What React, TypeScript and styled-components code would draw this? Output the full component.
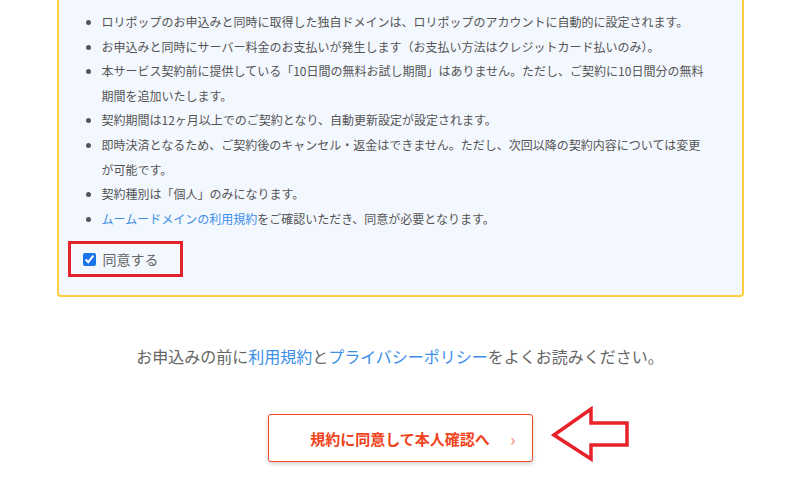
import React from "react";
import styled, { createGlobalStyle } from "styled-components";

const GlobalStyle = createGlobalStyle`
  html, body {
    margin: 0;
    padding: 0;
    background: #ffffff;
    overflow: hidden;
  }
  body {
    font-family: "Noto Sans CJK JP", "Noto Sans", sans-serif;
    color: #555555;
  }
`;

const Link = styled.a`
  color: #3a8ee8;
  text-decoration: none;
`;

const getNotes = (): React.ReactNode[] => [
  "ロリポップのお申込みと同時に取得した独自ドメインは、ロリポップのアカウントに自動的に設定されます。",
  "お申込みと同時にサーバー料金のお支払いが発生します（お支払い方法はクレジットカード払いのみ）。",
  <>
    本サービス契約前に提供している「10日間の無料お試し期間」はありません。ただし、ご契約に10日間分の無料
    <br />
    期間を追加いたします。
  </>,
  "契約期間は12ヶ月以上でのご契約となり、自動更新設定が設定されます。",
  <>
    即時決済となるため、ご契約後のキャンセル・返金はできません。ただし、次回以降の契約内容については変更
    <br />
    が可能です。
  </>,
  "契約種別は「個人」のみになります。",
  <>
    <Link href="#">ムームードメインの利用規約</Link>をご確認いただき、同意が必要となります。
  </>,
];

const App = () => {
  const notes = getNotes();

  return (
    <Page>
      <GlobalStyle />
      <Panel>
        <NoteList>
          {notes.map((note, i) => (
            <NoteItem key={i}>{note}</NoteItem>
          ))}
        </NoteList>
        <AgreeLabel>
          <input type="checkbox" defaultChecked />
          <span>同意する</span>
        </AgreeLabel>
      </Panel>

      <Notice>
        お申込みの前に<Link href="#">利用規約</Link>と
        <Link href="#">プライバシーポリシー</Link>をよくお読みください。
      </Notice>

      <ButtonRow>
        <ButtonWrap>
          <NextButton type="button">
            <span />
            <ButtonLabel>規約に同意して本人確認へ</ButtonLabel>
            <Chevron>›</Chevron>
          </NextButton>
          <PointerArrow width="80" height="56" viewBox="0 0 80 56">
            <polygon
              points="3,29 40,3 40,17 76,17 76,39 40,39 40,53"
              fill="none"
              stroke="#e8222a"
              strokeWidth="3.5"
              strokeLinejoin="miter"
            />
          </PointerArrow>
        </ButtonWrap>
      </ButtonRow>
    </Page>
  );
};

export default App;

const Page = styled.div`
  width: 800px;
  height: 479px;
  display: flex;
  flex-direction: column;
  align-items: center;
`;

const Panel = styled.div`
  box-sizing: border-box;
  width: 687px;
  margin-top: -20px;
  padding: 28px 0 18px 9px;
  background: #f3f7fe;
  border: 2px solid #ffcf3f;
  border-radius: 4px;
`;

const NoteList = styled.ul`
  margin: 0;
  padding: 0 0 0 34px;
  list-style: disc;
`;

const NoteItem = styled.li`
  font-size: 12px;
  line-height: 24.6px;
  color: #555555;
`;

const AgreeLabel = styled.label`
  box-sizing: border-box;
  margin-top: 10px;
  height: 36px;
  width: 115px;
  display: flex;
  align-items: center;
  gap: 7px;
  padding: 0 18px 0 12px;
  border: 3px solid #e5212b;
  font-size: 14px;
  color: #666666;

  input {
    margin: 0;
    width: 13px;
    height: 13px;
    accent-color: #1a73e8;
  }
`;

const Notice = styled.p`
  margin: 47px 0 0;
  font-size: 16px;
  line-height: 24px;
  color: #666666;
  text-align: center;
`;

const ButtonRow = styled.div`
  margin-top: 46px;
  display: flex;
  justify-content: center;
`;

const ButtonWrap = styled.div`
  position: relative;
`;

const NextButton = styled.button`
  box-sizing: border-box;
  width: 265px;
  height: 48px;
  display: grid;
  grid-template-columns: 1fr auto 1fr;
  align-items: center;
  padding: 0;
  background: #ffffff;
  border: 1.5px solid #ef4a2b;
  border-radius: 3px;
  box-shadow: 0 2px 4px rgba(0, 0, 0, 0.18);
  font-family: "Noto Sans CJK JP", "Noto Sans", sans-serif;
  cursor: pointer;
`;

const ButtonLabel = styled.span`
  font-size: 15px;
  font-weight: 700;
  color: #f04320;
`;

const Chevron = styled.span`
  justify-self: end;
  margin-right: 16px;
  font-size: 17px;
  font-weight: 700;
  color: #f5a08f;
  line-height: 1;
`;

const PointerArrow = styled.svg`
  position: absolute;
  left: calc(100% + 18px);
  top: -8px;
`;
